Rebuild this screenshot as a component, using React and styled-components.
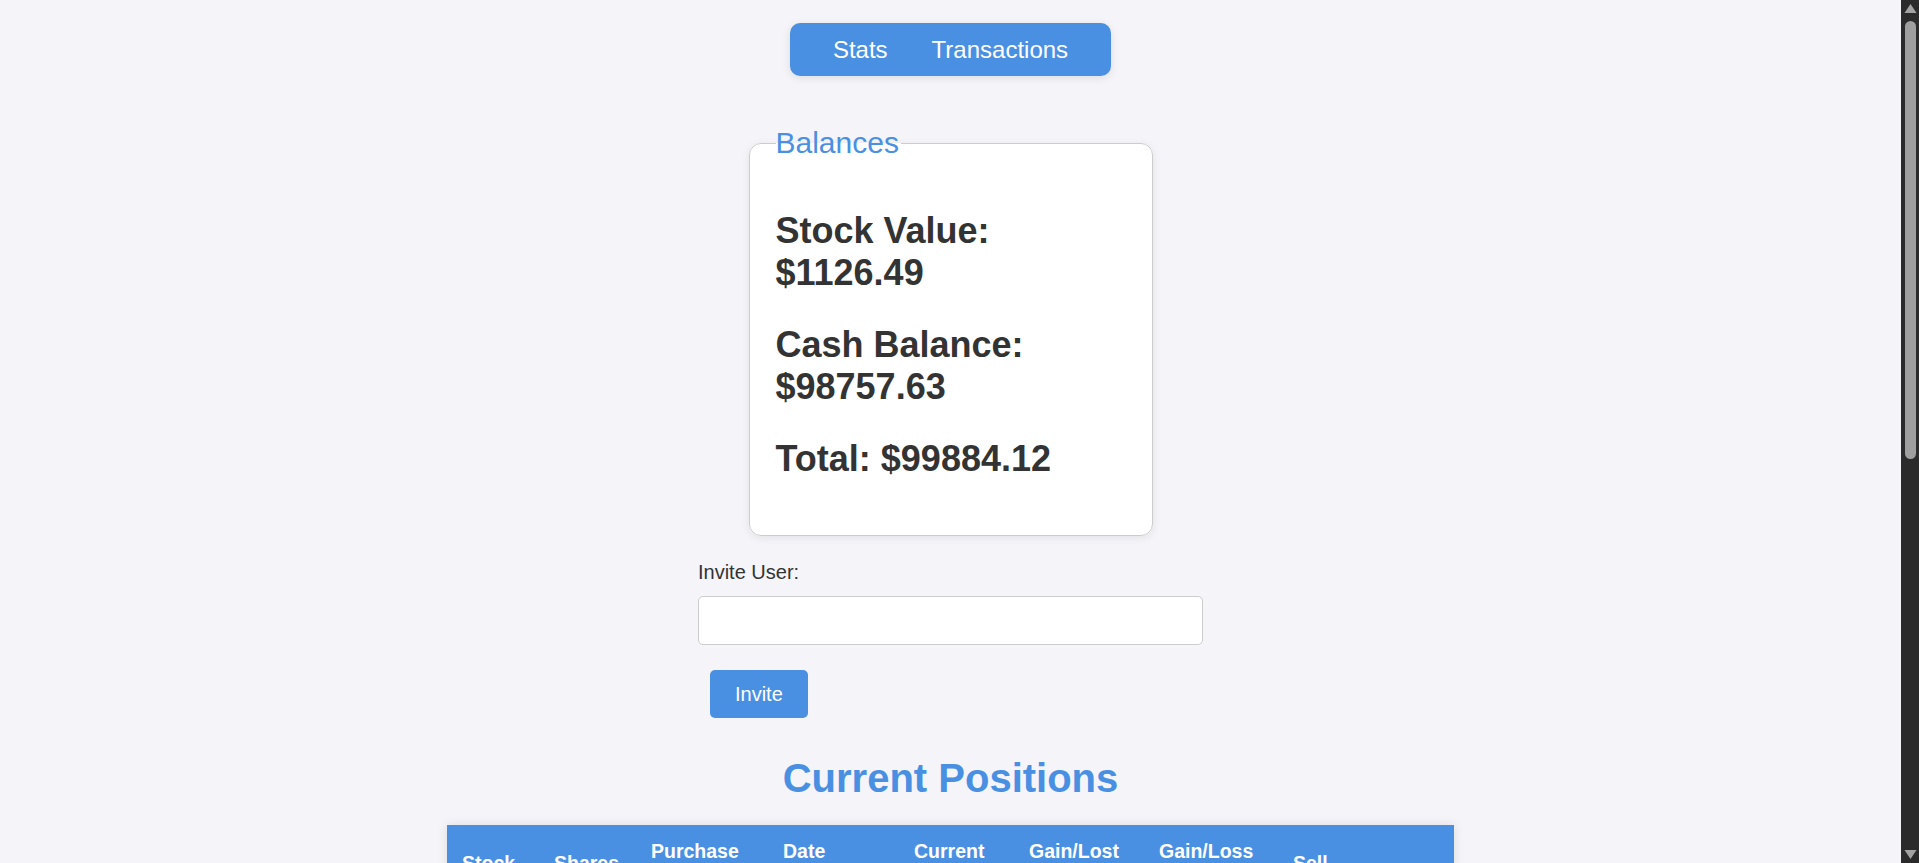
import React from "react";
import styled, { createGlobalStyle } from "styled-components";

const GlobalStyle = createGlobalStyle`
  html {
    background: #f4f4f9;
  }
  body {
    margin: 0;
    background: #f4f4f9;
    font-family: "Liberation Sans", Arial, sans-serif;
    color: #333;
  }
`;

const blue = "#4a90e2";

const Root = styled.div`
  display: flex;
  align-items: flex-start;
`;

const Page = styled.main`
  flex: 1;
  min-width: 0;
  display: flex;
  flex-direction: column;
  align-items: center;
  padding: 23px 0 60px;
`;

/* imitation of the browser's dark scrollbar seen at the right edge */
const ScrollRail = styled.div`
  flex: none;
  position: sticky;
  top: 0;
  width: 18px;
  height: 100vh;
  background: #2b2b2b;
  display: flex;
  flex-direction: column;
  align-items: center;
`;

const RailButton = styled.svg`
  flex: none;
  display: block;
  width: 18px;
  height: 17px;
`;

const RailThumb = styled.div`
  flex: none;
  width: 11px;
  height: 438px;
  margin: 4px 0 0 1px;
  border-radius: 6px;
  background: #9f9f9f;
`;

const RailSpacer = styled.div`
  flex: 1;
`;

const Nav = styled.nav`
  display: flex;
  align-items: center;
  height: 53px;
  padding: 0 21px;
  background: ${blue};
  border-radius: 10px;
  box-shadow: 0 2px 8px rgba(0, 0, 0, 0.1);
  box-sizing: border-box;
`;

const NavLink = styled.a`
  color: #fff;
  font-size: 24px;
  padding: 0 22px;
  text-decoration: none;
  cursor: pointer;
`;

const Card = styled.fieldset`
  box-sizing: border-box;
  width: 404px;
  margin: 50px 0 0;
  padding: 20px 24px 25px 26px;
  background: #fff;
  border: 1px solid #ccc;
  border-radius: 12px;
  box-shadow: 0 2px 8px rgba(0, 0, 0, 0.08);
  min-inline-size: 0;
`;

const Legend = styled.legend`
  padding: 0 2px 0 0;
  font-size: 30px;
  color: ${blue};
`;

const Balance = styled.h2`
  margin: 30px 0;
  font-size: 36px;
  font-weight: bold;
  color: #333;
`;

const InviteForm = styled.form`
  display: flex;
  flex-direction: column;
  align-items: flex-start;
  width: 505px;
  margin-top: 25px;
`;

const Label = styled.label`
  font-size: 20px;
  color: #333;
`;

const TextInput = styled.input`
  box-sizing: border-box;
  width: 100%;
  height: 49px;
  margin-top: 12px;
  padding: 0 12px;
  border: 1px solid #ccc;
  border-radius: 5px;
  background: #fff;
  font-size: 20px;
  font-family: inherit;
`;

const Button = styled.button`
  box-sizing: border-box;
  height: 48px;
  padding: 0 25px;
  margin: ${(p) => p.$margin || "0"};
  border: none;
  border-radius: 5px;
  background: ${blue};
  color: #fff;
  font-size: 20px;
  font-family: inherit;
  cursor: pointer;
`;

const Title = styled.h1`
  margin: 38px 0 24px;
  font-size: 40px;
  font-weight: bold;
  color: ${blue};
`;

const Table = styled.table`
  width: 1007px;
  border-collapse: collapse;
  background: #fff;
  box-shadow: 0 0 10px rgba(0, 0, 0, 0.1);
  table-layout: fixed;
`;

const Th = styled.th`
  padding: 15px;
  background: ${blue};
  color: #fff;
  font-size: 19.5px;
  font-weight: bold;
  text-align: left;
  vertical-align: middle;
`;

const Td = styled.td`
  padding: 15px;
  font-size: 19px;
  color: #333;
  border-bottom: 1px solid #ddd;
`;

const SmallButton = styled(Button)`
  height: 38px;
  padding: 0 18px;
  font-size: 17px;
`;

const widths = [92, 97, 132, 131, 115, 130, 134, 176];

const headers = [
  "Stock",
  "Shares",
  "Purchase Price",
  "Date Purchased",
  "Current Price",
  "Gain/Lost ($)",
  "Gain/Loss (%)",
  "Sell",
];

const rows = [
  ["AAPL", 1, 189.84, "2024-05-01", 191.29],
  ["MSFT", 1, 412.3, "2024-05-02", 414.74],
  ["TSLA", 1, 178.5, "2024-05-03", 177.12],
  ["AMD", 1, 152.2, "2024-05-06", 154.33],
  ["F", 2, 12.35, "2024-05-07", 12.14],
  ["INTC", 3, 30.42, "2024-05-08", 30.43],
  ["NIO", 4, 4.1, "2024-05-09", 4.36],
  ["SIRI", 2, 2.98, "2024-05-10", 2.95],
];

export default function App() {
  return (
    <>
      <GlobalStyle />
      <Root>
        <Page>
          <Nav>
            <NavLink>Stats</NavLink>
            <NavLink>Transactions</NavLink>
          </Nav>

          <Card>
            <Legend>Balances</Legend>
            <Balance>Stock Value: $1126.49</Balance>
            <Balance>Cash Balance: $98757.63</Balance>
            <Balance>Total: $99884.12</Balance>
          </Card>

          <InviteForm onSubmit={(e) => e.preventDefault()}>
            <Label htmlFor="invite">Invite User:</Label>
            <TextInput id="invite" type="text" />
            <Button type="submit" $margin="25px 0 0 12px">
              Invite
            </Button>
          </InviteForm>

          <Title>Current Positions</Title>

          <Table>
            <colgroup>
              {widths.map((w, i) => (
                <col key={i} style={{ width: w }} />
              ))}
            </colgroup>
            <thead>
              <tr>
                {headers.map((h) => (
                  <Th key={h}>{h}</Th>
                ))}
              </tr>
            </thead>
            <tbody>
              {rows.map(([sym, shares, buy, date, cur]) => {
                const gain = (cur - buy) * shares;
                const pct = ((cur - buy) / buy) * 100;
                return (
                  <tr key={sym}>
                    <Td>{sym}</Td>
                    <Td>{shares}</Td>
                    <Td>${buy.toFixed(2)}</Td>
                    <Td>{date}</Td>
                    <Td>${cur.toFixed(2)}</Td>
                    <Td>${gain.toFixed(2)}</Td>
                    <Td>{pct.toFixed(2)}%</Td>
                    <Td>
                      <SmallButton type="button">Sell</SmallButton>
                    </Td>
                  </tr>
                );
              })}
            </tbody>
          </Table>
        </Page>

        <ScrollRail aria-hidden="true">
          <RailButton viewBox="0 0 18 17">
            <path d="M9.5 4 L15.5 13 L3.5 13 Z" fill="#a3a3a3" />
          </RailButton>
          <RailThumb />
          <RailSpacer />
          <RailButton viewBox="0 0 18 17">
            <path d="M3.5 4 L15.5 4 L9.5 13 Z" fill="#a3a3a3" />
          </RailButton>
        </ScrollRail>
      </Root>
    </>
  );
}
